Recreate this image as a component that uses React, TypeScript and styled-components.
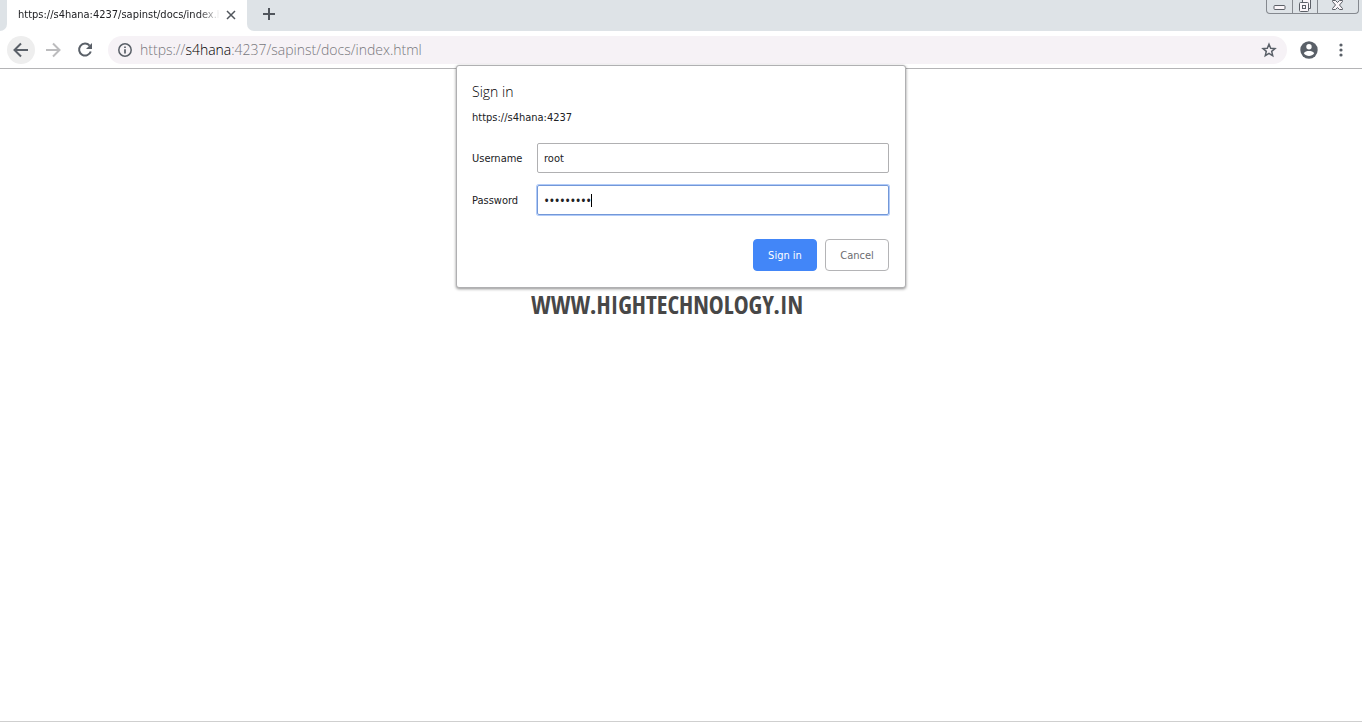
import React from "react";
import styled, { createGlobalStyle } from "styled-components";

const GlobalStyle = createGlobalStyle`
  * { box-sizing: border-box; }
  body {
    margin: 0;
    background: #fff;
    color: #202124;
    font-family: "DejaVu Sans Condensed", "Noto Sans", sans-serif;
    font-size: 11px;
  }
  button, input { font: inherit; color: inherit; }
`;

const Window = styled.div`
  position: relative;
  display: flex;
  flex-direction: column;
  min-height: 100vh;
  padding-bottom: 1px;
`;

const TabStrip = styled.header`
  display: flex;
  height: 31px;
  background: #dee3e7;
`;

const StripEdge = styled.div`
  width: 7px;
  background: #dee3e7;
  border-bottom-right-radius: 7px;
`;

const TabBase = styled.div<{ $grow?: boolean }>`
  display: flex;
  flex: ${(p) => (p.$grow ? "1" : "none")};
  background: #fff;
`;

const Tab = styled.div`
  display: flex;
  align-items: center;
  width: 240px;
  padding: 0 8px 2px 11px;
  background: #fff;
  border-radius: 7px 7px 0 0;
`;

const TabTitle = styled.span`
  flex: 1;
  margin-right: 4px;
  overflow: hidden;
  white-space: nowrap;
  mask-image: linear-gradient(to right, #000 180px, transparent 202px);
`;

const NewTabArea = styled.div`
  display: flex;
  flex: 1;
  align-items: center;
  padding: 0 0 3px 14px;
  background: #dee3e7;
  border-bottom-left-radius: 7px;
`;

const IconButton = styled.button<{ $size: number; $fill?: string }>`
  display: flex;
  flex: none;
  align-items: center;
  justify-content: center;
  width: ${(p) => p.$size}px;
  height: ${(p) => p.$size}px;
  padding: 0;
  border: 0;
  border-radius: 50%;
  background: ${(p) => p.$fill ?? "transparent"};
`;

const WindowControls = styled.div`
  display: flex;
  height: 14px;
  margin-right: 3px;
  border: 1px solid #85898f;
  border-top: 0;
  border-radius: 0 0 4px 4px;
`;

const WindowButton = styled.button<{ $width: number }>`
  display: flex;
  align-items: flex-start;
  justify-content: center;
  width: ${(p) => p.$width}px;
  padding: 0;
  border: 0;
  background: transparent;
  & + & { border-left: 1px solid #85898f; }
`;

const Toolbar = styled.nav`
  display: flex;
  align-items: center;
  gap: 4px;
  height: 38px;
  border-bottom: 1px solid #b4b4b6;
  padding: 0 7px;
`;

const AddressBar = styled.div`
  display: flex;
  flex: 1;
  align-items: center;
  gap: 8px;
  height: 28px;
  margin: 0 4px 0 5px;
  padding: 0 4px 0 10px;
  border-radius: 14px;
  background: #f6f2f6;
`;

const Address = styled.div`
  flex: 1;
  color: #77777c;
  font-family: "Open Sans", "Noto Sans", sans-serif;
  font-size: 14px;
  font-weight: 300;
  line-height: 20px;
  outline: 0;
`;

const Host = styled.span`
  color: #000;
`;

const Page = styled.main`
  display: flex;
  flex: 1;
  align-items: flex-start;
  justify-content: center;
  padding: 215px 28px 0 0;
  border-bottom: 1px solid #cfcfcf;
`;

const Watermark = styled.div`
  color: #474747;
  font-family: "Open Sans Condensed", "Open Sans", sans-serif;
  font-size: 25px;
  font-weight: 700;
  line-height: 40px;
`;

const Dialog = styled.form`
  position: absolute;
  top: 65px;
  left: 50%;
  width: 450px;
  margin-left: -225px;
  padding: 16px 16px 16px 15px;
  border: 1px solid #b0b0b2;
  border-radius: 3px;
  background: #fff;
  box-shadow: 0 1px 3px rgba(0, 0, 0, 0.45);
`;

const DialogTitle = styled.h1`
  margin: 0;
  color: #000;
  font-family: "Open Sans", "Noto Sans", sans-serif;
  font-size: 14px;
  font-weight: 300;
  line-height: 20px;
`;

const Origin = styled.p`
  margin: 8px 0 17px;
  line-height: 16px;
`;

const FieldRow = styled.div`
  display: flex;
  align-items: center;
  margin-bottom: 12px;
`;

const Label = styled.label`
  width: 65px;
`;

const Field = styled.div<{ $active?: boolean }>`
  display: flex;
  flex: 1;
  align-items: center;
  height: 30px;
  padding: 0 6px;
  border: 1px solid ${(p) => (p.$active ? "#7398d8" : "#b0b0b2")};
  border-radius: 2px;
  box-shadow: ${(p) => (p.$active ? "0 0 0 1px #b1cbf8" : "none")};
`;

const TextInput = styled.input<{ $hug?: boolean }>`
  ${(p) =>
    p.$hug
      ? 'field-sizing: content; font-family: "Open Sans", sans-serif; font-size: 14px;'
      : "flex: 1;"}
  min-width: 0;
  padding: 0;
  border: 0;
  outline: 0;
  background: transparent;
  caret-color: transparent;
`;

const Caret = styled.span`
  width: 1px;
  height: 13px;
  background: #000;
`;

const Actions = styled.div`
  display: flex;
  justify-content: flex-end;
  gap: 8px;
  margin-top: 24px;
`;

const ActionButton = styled.button<{ $primary?: boolean }>`
  width: 64px;
  height: 32px;
  padding: 0;
  border: 1px solid ${(p) => (p.$primary ? "#4286f8" : "#b4b4b6")};
  border-radius: 4px;
  background: ${(p) => (p.$primary ? "#4286f8" : "#fff")};
  color: ${(p) => (p.$primary ? "#fff" : "#6c6c70")};
`;

const INK = "#5a6068";

export default function App() {
  return (
    <>
      <GlobalStyle />
      <Window>
        <TabStrip>
          <TabBase>
            <StripEdge />
            <Tab>
              <TabTitle>https://s4hana:4237/sapinst/docs/index.html</TabTitle>
              <IconButton type="button" $size={16} aria-label="Close tab">
                <svg width="10" height="10" stroke="#50555c" strokeWidth="1.5">
                  <path d="M1 1L9 9M9 1L1 9" />
                </svg>
              </IconButton>
            </Tab>
          </TabBase>
          <TabBase $grow>
            <NewTabArea>
              <IconButton type="button" $size={16} aria-label="New tab">
                <svg width="12" height="12" stroke="#50555c" strokeWidth="2">
                  <path d="M6 0V12M0 6H12" />
                </svg>
              </IconButton>
            </NewTabArea>
          </TabBase>
          <WindowControls>
            <WindowButton type="button" $width={25} aria-label="Minimize">
              <svg width="13" height="12" fill="#fbf6f9" stroke="#5c6067">
                <rect x="1" y="5.5" width="11" height="4" rx="1" />
              </svg>
            </WindowButton>
            <WindowButton type="button" $width={25} aria-label="Restore">
              <svg width="14" height="13" fill="#fbf6f9" stroke="#5c6067">
                <path d="M4.500 2.500V-0.500H12.500V8.500H9.500" />
                <rect x="1.500" y="2.500" width="9" height="9" rx="1" />
                <rect x="4.500" y="5.500" width="3" height="3" />
              </svg>
            </WindowButton>
            <WindowButton type="button" $width={41} aria-label="Close">
              <svg width="14" height="12" fill="#fbf6f9" stroke="#5c6067">
                <path d="M1.500 0.500H4.500L6.500 2.500L8.500 0.500H11.500V1.500L8.500 5L11.500 8.500V9.500H8.500L6.500 7.500L4.500 9.500H1.500V8.500L4.500 5L1.500 1.500Z" />
              </svg>
            </WindowButton>
          </WindowControls>
        </TabStrip>

        <Toolbar>
          <IconButton type="button" $size={28} $fill="#eeeeee" aria-label="Back">
            <svg width="16" height="16" fill="none" stroke={INK} strokeWidth="2">
              <path d="M15 8H2M8 1.500L1.500 8L8 14.500" />
            </svg>
          </IconButton>
          <IconButton type="button" $size={28} aria-label="Forward">
            <svg width="16" height="16" fill="none" stroke="#bcbcbe" strokeWidth="2">
              <path d="M1 8H14M8 1.500L14.500 8L8 14.500" />
            </svg>
          </IconButton>
          <IconButton type="button" $size={28} aria-label="Reload">
            <svg width="16" height="16" fill="none" stroke={INK} strokeWidth="2">
              <path d="M12.600 3.600A6 6 0 1 0 13.800 9.500" />
              <path d="M15 1V7H9Z" fill={INK} stroke="none" />
            </svg>
          </IconButton>
          <AddressBar>
            <IconButton type="button" $size={14} aria-label="View site information">
              <svg width="14" height="14" fill="none" stroke={INK}>
                <circle cx="7" cy="7" r="6.200" strokeWidth="1.500" />
                <path d="M7 6.200V10.500M7 3.500V5" strokeWidth="1.700" />
              </svg>
            </IconButton>
            <Address
              role="textbox"
              aria-label="Address"
              contentEditable
              suppressContentEditableWarning
              spellCheck={false}
            >
              https://<Host>s4hana</Host>:4237/sapinst/docs/index.html
            </Address>
            <IconButton type="button" $size={28} aria-label="Bookmark this page">
              <svg width="16" height="16" fill="none" stroke={INK} strokeWidth="1.500">
                <path d="M8 2.200L9.700 6.200L14 6.600L10.700 9.400L11.700 13.700L8 11.400L4.300 13.700L5.300 9.400L2 6.600L6.300 6.200Z" />
              </svg>
            </IconButton>
          </AddressBar>
          <IconButton type="button" $size={28} aria-label="Profile">
            <svg width="18" height="18">
              <circle cx="9" cy="9" r="8.700" fill={INK} />
              <circle cx="9" cy="5.800" r="2.700" fill="#fff" />
              <path d="M3.800 12.200C4.500 10.500 7 9.900 9 9.900S13.500 10.500 14.200 12.200C13 14 11 15 9 15S5 14 3.800 12.200Z" fill="#fff" />
            </svg>
          </IconButton>
          <IconButton type="button" $size={28} aria-label="Menu">
            <svg width="4" height="14" fill={INK}>
              <circle cx="2" cy="2" r="1.600" />
              <circle cx="2" cy="7" r="1.600" />
              <circle cx="2" cy="12" r="1.600" />
            </svg>
          </IconButton>
        </Toolbar>

        <Page>
          <Watermark>WWW.HIGHTECHNOLOGY.IN</Watermark>
        </Page>

        <Dialog onSubmit={(e: React.FormEvent) => e.preventDefault()}>
          <DialogTitle>Sign in</DialogTitle>
          <Origin>https://s4hana:4237</Origin>
          <FieldRow>
            <Label htmlFor="username">Username</Label>
            <Field>
              <TextInput id="username" type="text" defaultValue="root" />
            </Field>
          </FieldRow>
          <FieldRow>
            <Label htmlFor="password">Password</Label>
            <Field $active>
              <TextInput id="password" type="password" $hug defaultValue="password1" />
              <Caret />
            </Field>
          </FieldRow>
          <Actions>
            <ActionButton type="submit" $primary>Sign in</ActionButton>
            <ActionButton type="button">Cancel</ActionButton>
          </Actions>
        </Dialog>
      </Window>
    </>
  );
}
